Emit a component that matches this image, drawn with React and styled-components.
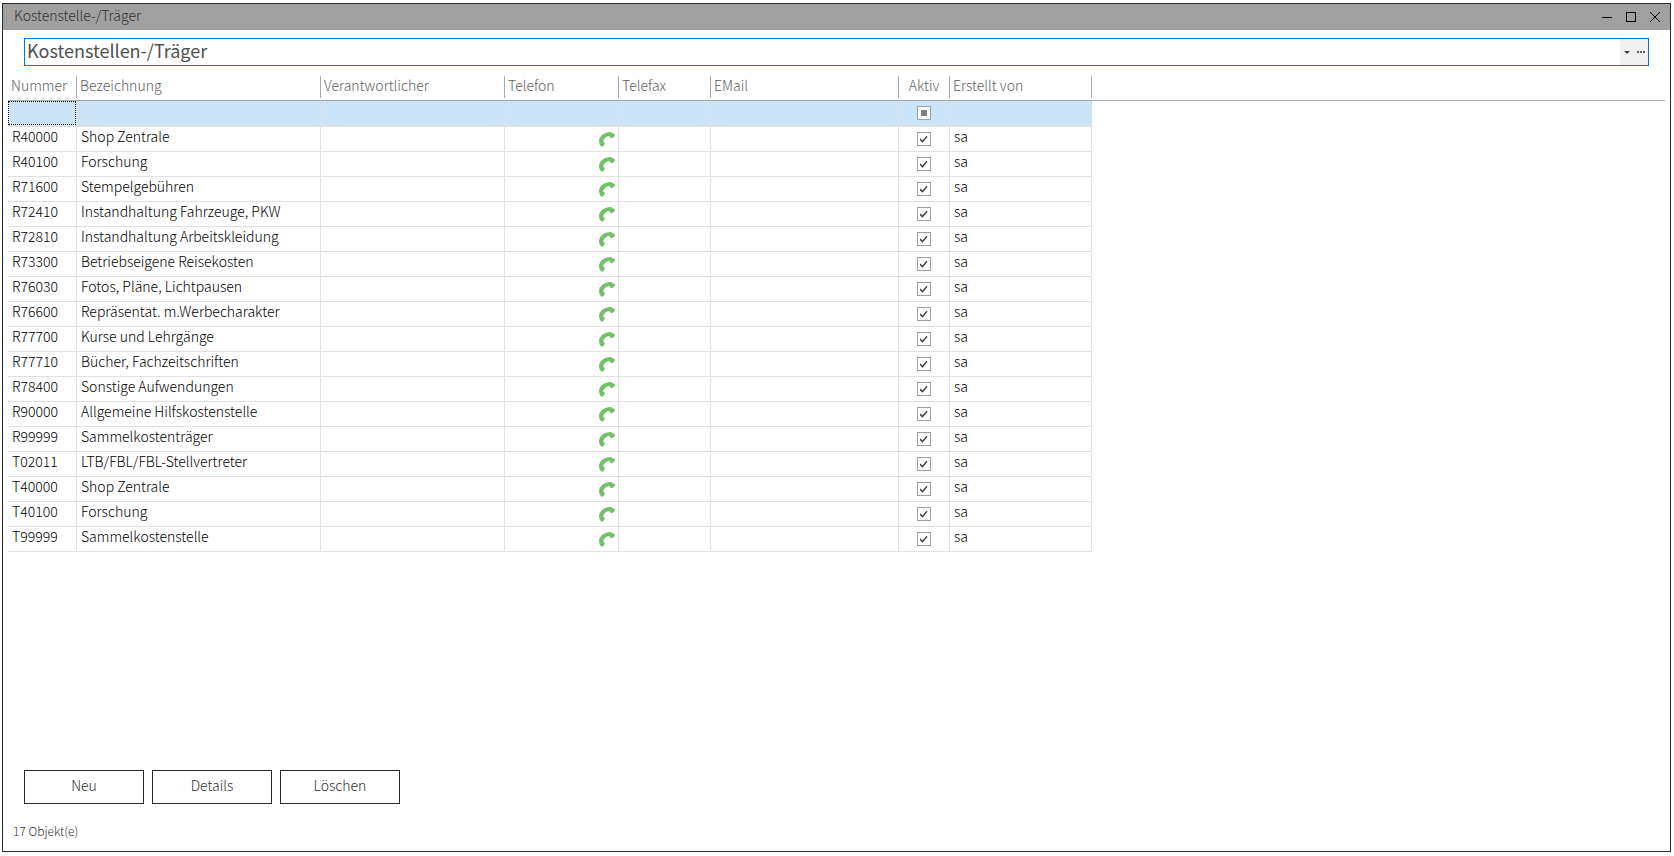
import { useEffect, useRef, useState } from "react";
import styled, { createGlobalStyle, ThemeProvider } from "styled-components";

const theme = {
    color: {
        main: "#2b2b2b",
        second: "#505050",
        header: "#606060",
        line: "#e0e0e0",
        rule: "#a8a8a8",
        selected: "#cce4f7",
        focus: "#0078d7",
        phone: "#74bf69"
    },
    fontSize: {
        title: "18px",
        main: "14px",
        small: "12px"
    }
};

const GlobalStyle = createGlobalStyle`
    * {
        box-sizing: border-box;
    }
    body {
        margin: 0;
        background-color: #ffffff;
        font-family: "Noto Sans CJK SC", "Noto Sans", sans-serif;
        font-size: 14px;
        font-weight: 300;
        line-height: 18px;
    }
    button, input {
        font-family: inherit;
        font-weight: inherit;
    }
`;

const Page = styled.div`
    height: 100vh;
    padding: 3px 3px 4px 2px;
`;

const Window = styled.div`
    height: 100%;
    display: flex;
    flex-direction: column;
    border: 1px solid ${props => props.theme.color.main};
`;

const TitleBar = styled.header`
    height: 26px;
    padding: 0 10px 0 11px;
    display: flex;
    align-items: center;
    justify-content: space-between;
    background-color: #a0a0a0;
`;

const WindowTitle = styled.h1`
    margin: 0;
    padding-bottom: 4px;
    font-size: ${props => props.theme.fontSize.main};
    font-weight: 300;
    line-height: 22px;
    color: #303030;
`;

const WindowButtons = styled.div`
    display: flex;
    gap: 14px;
`;

const IconButton = styled.button`
    padding: 0;
    display: flex;
    border: none;
    background: none;
`;

const ViewBox = styled.div`
    height: 28px;
    margin: 8px 21px 0;
    display: flex;
    border: 1px solid ${props => props.theme.color.focus};
`;

const ViewInput = styled.input`
    flex: 1;
    align-self: flex-start;
    min-width: 0;
    height: 23px;
    padding: 0 2px;
    border: none;
    outline: none;
    font-size: ${props => props.theme.fontSize.title};
    font-weight: 400;
    line-height: 23px;
    color: ${props => props.theme.color.second};
`;

const ViewButton = styled(IconButton)`
    width: 14px;
    align-items: center;
    justify-content: center;
    background-color: #f0f0f0;
`;

const ListArea = styled.main`
    flex: 1;
    min-height: 0;
    margin: 10px 5px 0;
    overflow: auto;
`;

const Table = styled.table`
    width: 100%;
    table-layout: fixed;
    border-collapse: separate;
    border-spacing: 0;
`;

const HeadCell = styled.th`
    height: 25px;
    padding: 0;
    border-bottom: 1px solid ${props => props.theme.color.rule};
    font-weight: 300;
    text-align: ${props => props.$align || "left"};
    vertical-align: top;
    color: ${props => props.theme.color.header};
`;

const HeadLabel = styled.div`
    height: 22px;
    padding: 0 3px;
    line-height: 18px;
    border-right: 1px solid ${props => props.theme.color.rule};
`;

const Row = styled.tr`
    height: ${props => (props.$selected ? "26px" : "25px")};
    background-color: ${props => (props.$selected ? props.theme.color.selected : "#ffffff")};
`;

const Cell = styled.td`
    padding: ${props => (props.$align === "center" ? "0 4px 0 3px" : "0 3px 0 4px")};
    border-right: 1px solid ${props => props.theme.color.line};
    border-bottom: ${props => (props.$selected ? "2px" : "1px")} solid ${props => props.theme.color.line};
    line-height: 18px;
    text-align: ${props => props.$align || "left"};
    vertical-align: ${props => (props.$align ? "middle" : "top")};
    white-space: nowrap;
    color: #000000;
`;

const FocusedCell = styled(Cell)`
    padding: 0;
`;

const FocusFrame = styled.div`
    height: 24px;
    border: 1px dotted #000000;
`;

const FillCell = styled.td`
    padding: 0;
    background-color: #ffffff;
`;

const PhoneButton = styled(IconButton)`
    margin-left: auto;
`;

const CheckBox = styled.input`
    appearance: none;
    width: 14px;
    height: 14px;
    margin: 0 auto;
    display: grid;
    place-content: center;
    border: 1px solid #a0a0a0;
    background-color: #ffffff;
    &:checked::before {
        content: "";
        width: 8px;
        height: 8px;
        background-color: #404040;
        clip-path: polygon(0 58%, 12% 44%, 37% 68%, 88% 10%, 100% 22%, 38% 96%);
    }
    &:indeterminate::before {
        content: "";
        width: 6px;
        height: 6px;
        background-color: #808080;
    }
`;

const Footer = styled.footer`
    padding: 0 21px 11px;
`;

const ActionButtons = styled.div`
    display: flex;
    gap: 8px;
`;

const ActionButton = styled.button`
    width: 120px;
    height: 34px;
    padding: 0 0 5px;
    border: 1px solid ${props => props.theme.color.main};
    background-color: #ffffff;
    font-size: ${props => props.theme.fontSize.main};
    line-height: 18px;
    color: #303030;
`;

const Status = styled.div`
    margin: 18px 0 0 -11px;
    font-size: ${props => props.theme.fontSize.small};
    color: #303030;
`;

const columns = [
    { label: "Nummer", width: 69 },
    { label: "Bezeichnung", width: 244 },
    { label: "Verantwortlicher", width: 184 },
    { label: "Telefon", width: 114 },
    { label: "Telefax", width: 92 },
    { label: "EMail", width: 188 },
    { label: "Aktiv", width: 51, align: "center" },
    { label: "Erstellt von", width: 142 }
];

const costCenters = [
    { number: "R40000", name: "Shop Zentrale" },
    { number: "R40100", name: "Forschung" },
    { number: "R71600", name: "Stempelgebühren" },
    { number: "R72410", name: "Instandhaltung Fahrzeuge, PKW" },
    { number: "R72810", name: "Instandhaltung Arbeitskleidung" },
    { number: "R73300", name: "Betriebseigene Reisekosten" },
    { number: "R76030", name: "Fotos, Pläne, Lichtpausen" },
    { number: "R76600", name: "Repräsentat. m.Werbecharakter" },
    { number: "R77700", name: "Kurse und Lehrgänge" },
    { number: "R77710", name: "Bücher, Fachzeitschriften" },
    { number: "R78400", name: "Sonstige Aufwendungen" },
    { number: "R90000", name: "Allgemeine Hilfskostenstelle" },
    { number: "R99999", name: "Sammelkostenträger" },
    { number: "T02011", name: "LTB/FBL/FBL-Stellvertreter" },
    { number: "T40000", name: "Shop Zentrale" },
    { number: "T40100", name: "Forschung" },
    { number: "T99999", name: "Sammelkostenstelle" }
];

const PhoneIcon = () => (
    <svg width="16" height="15" viewBox="0 0 16 15">
        <path
            d="M0 8.4C0.6 4 5.6 0 11.4 0C12.6 0 13 .8 13.6 1.2C14.6 1.2 15.8 2 16 3C15.6 4.6 14.2 6 12.4 6.2C11.2 6 10.8 4.8 10.4 3.8C7.2 4.4 4.6 6.6 4 9.6C4.8 10 5.8 10.6 5.8 11.6C5.4 13.2 4.4 14.4 3.2 14.8C1.4 14.4 0 11.8 0 8.4Z"
            fill={theme.color.phone}
        />
    </svg>
);

const FilterRow = () => {
    const activeRef = useRef(null);

    useEffect(() => {
        activeRef.current.indeterminate = true;
    }, []);

    return (
        <Row $selected>
            <FocusedCell $selected>
                <FocusFrame />
            </FocusedCell>
            {columns.slice(1).map(column => (
                <Cell key={column.label} $selected $align={column.align}>
                    {
                        column.label === "Aktiv" &&
                        <CheckBox ref={activeRef} type="checkbox" aria-label="Aktiv" />
                    }
                </Cell>
            ))}
            <FillCell />
        </Row>
    );
};

const CostCenterRow = ({ number, name }) => (
    <Row>
        <Cell>{number}</Cell>
        <Cell>{name}</Cell>
        <Cell />
        <Cell $align="right">
            <PhoneButton type="button" aria-label={`${number} anrufen`}>
                <PhoneIcon />
            </PhoneButton>
        </Cell>
        <Cell />
        <Cell />
        <Cell $align="center">
            <CheckBox type="checkbox" defaultChecked aria-label={`${number} aktiv`} />
        </Cell>
        <Cell>sa</Cell>
        <FillCell />
    </Row>
);

const App = () => {
    const [view, setView] = useState("Kostenstellen-/Träger");

    return (
        <ThemeProvider theme={theme}>
            <GlobalStyle />
            <Page>
                <Window>
                    <TitleBar>
                        <WindowTitle>Kostenstelle-/Träger</WindowTitle>
                        <WindowButtons>
                            <IconButton type="button" aria-label="Minimieren">
                                <svg width="10" height="10" shapeRendering="crispEdges">
                                    <path d="M0 5.5H10" stroke="#000000" />
                                </svg>
                            </IconButton>
                            <IconButton type="button" aria-label="Maximieren">
                                <svg width="10" height="10" shapeRendering="crispEdges">
                                    <path d="M0.5 0.5H9.5V9.5H0.5Z" fill="none" stroke="#000000" />
                                </svg>
                            </IconButton>
                            <IconButton type="button" aria-label="Schließen">
                                <svg width="10" height="10">
                                    <path d="M0 0L10 10M10 0L0 10" stroke="#000000" />
                                </svg>
                            </IconButton>
                        </WindowButtons>
                    </TitleBar>
                    <ViewBox>
                        <ViewInput
                            aria-label="Ansicht"
                            value={view}
                            onChange={event => setView(event.target.value)}
                        />
                        <ViewButton type="button" aria-label="Auswahl öffnen">
                            <svg width="6" height="3">
                                <path d="M0 0H6L3 3Z" fill="#404040" />
                            </svg>
                        </ViewButton>
                        <ViewButton type="button" aria-label="Weitere Optionen">
                            <svg width="8" height="2" shapeRendering="crispEdges">
                                <path d="M0 1H2M3 1H5M6 1H8" stroke="#606060" strokeWidth="2" />
                            </svg>
                        </ViewButton>
                    </ViewBox>
                    <ListArea>
                        <Table>
                            <colgroup>
                                {columns.map(column => <col key={column.label} width={column.width} />)}
                                <col />
                            </colgroup>
                            <thead>
                                <tr>
                                    {columns.map(column => (
                                        <HeadCell key={column.label} scope="col" $align={column.align}>
                                            <HeadLabel>{column.label}</HeadLabel>
                                        </HeadCell>
                                    ))}
                                    <HeadCell as="td" />
                                </tr>
                            </thead>
                            <tbody>
                                <FilterRow />
                                {costCenters.map(item => <CostCenterRow key={item.number} {...item} />)}
                            </tbody>
                        </Table>
                    </ListArea>
                    <Footer>
                        <ActionButtons>
                            <ActionButton type="button">Neu</ActionButton>
                            <ActionButton type="button">Details</ActionButton>
                            <ActionButton type="button">Löschen</ActionButton>
                        </ActionButtons>
                        <Status>17 Objekt(e)</Status>
                    </Footer>
                </Window>
            </Page>
        </ThemeProvider>
    );
};

export default App;
